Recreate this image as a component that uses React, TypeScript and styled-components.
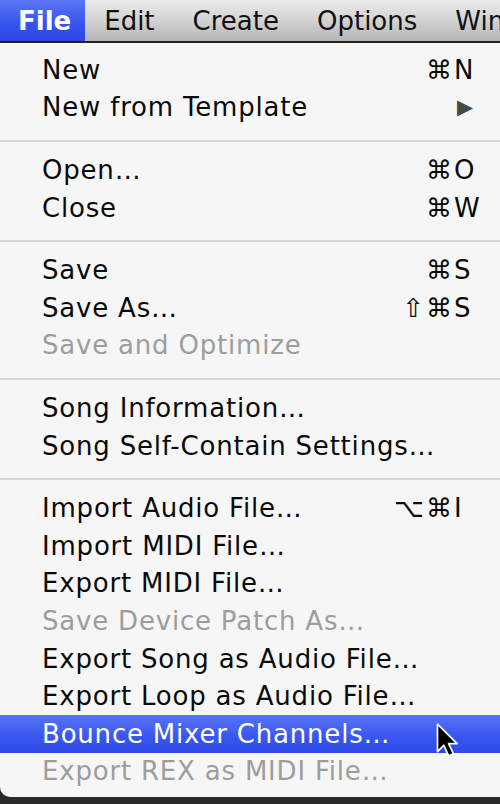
import styled, { createGlobalStyle } from "styled-components";

const GlobalStyle = createGlobalStyle`
   html, body {
      margin: 0;
      padding: 0;
      background: #2a2a2a;
   }
   body {
      font-family: "DejaVu Sans", "Liberation Sans", sans-serif;
      overflow: hidden;
   }
`;

type Entry =
   | { kind: "item"; label: string; mods?: string; keyChar?: string; submenu?: boolean; disabled?: boolean; active?: boolean }
   | { kind: "sep" };

const entries: Entry[] = [
   { kind: "item", label: "New", mods: "⌘", keyChar: "N" },
   { kind: "item", label: "New from Template", submenu: true },
   { kind: "sep" },
   { kind: "item", label: "Open...", mods: "⌘", keyChar: "O" },
   { kind: "item", label: "Close", mods: "⌘", keyChar: "W" },
   { kind: "sep" },
   { kind: "item", label: "Save", mods: "⌘", keyChar: "S" },
   { kind: "item", label: "Save As...", mods: "⇧⌘", keyChar: "S" },
   { kind: "item", label: "Save and Optimize", disabled: true },
   { kind: "sep" },
   { kind: "item", label: "Song Information..." },
   { kind: "item", label: "Song Self-Contain Settings..." },
   { kind: "sep" },
   { kind: "item", label: "Import Audio File...", mods: "⌥⌘", keyChar: "I" },
   { kind: "item", label: "Import MIDI File..." },
   { kind: "item", label: "Export MIDI File..." },
   { kind: "item", label: "Save Device Patch As...", disabled: true },
   { kind: "item", label: "Export Song as Audio File..." },
   { kind: "item", label: "Export Loop as Audio File..." },
   { kind: "item", label: "Bounce Mixer Channels...", active: true },
   { kind: "item", label: "Export REX as MIDI File...", disabled: true },
];

const titles = ["File", "Edit", "Create", "Options", "Windows"];

function App() {
   return (
      <>
         <GlobalStyle />
         <Screen>
            <MenuBar>
               {titles.map((t, i) => (
                  <MenuTitle key={t} open={i === 0}>
                     {t}
                  </MenuTitle>
               ))}
            </MenuBar>
            <Dropdown>
               {entries.map((e, i) =>
                  e.kind === "sep" ? (
                     <Separator key={i} />
                  ) : (
                     <Row key={i} disabled={e.disabled} active={e.active}>
                        <span>{e.label.replace(/\.\.\.$/, "…")}</span>
                        {e.submenu && <SubArrow>▶</SubArrow>}
                        {e.keyChar && (
                           <Shortcut>
                              <Mods>{e.mods}</Mods>
                              <KeyChar>{e.keyChar}</KeyChar>
                           </Shortcut>
                        )}
                        {e.active && (
                           <Cursor viewBox="0 0 22 34" width="24" height="36">
                              <path
                                 d="M2 1 L2 27 L8 21 L12.5 31 L17 29 L12.5 19.5 L20.5 19.5 Z"
                                 fill="#000"
                                 stroke="#fff"
                                 strokeWidth="1.6"
                                 strokeLinejoin="round"
                              />
                           </Cursor>
                        )}
                     </Row>
                  )
               )}
            </Dropdown>
         </Screen>
      </>
   );
}

export default App;

const Screen = styled.div`
   width: 500px;
   height: 804px;
   display: flex;
   flex-direction: column;
   overflow: hidden;
`;

const MenuBar = styled.div`
   height: 41px;
   flex-shrink: 0;
   display: flex;
   align-items: stretch;
   background: linear-gradient(#ebebeb, #d0d0d0 55%, #b4b4b4);
   border-bottom: 2px solid #222;
   white-space: nowrap;
`;

const MenuTitle = styled.div<{ open?: boolean }>`
   display: flex;
   align-items: center;
   padding: 0 19px;
   font-size: 26px;
   color: #111;
   ${({ open }) =>
      open &&
      `
      color: #fff;
      font-weight: 700;
      padding: 0 14px 0 18px;
      background: linear-gradient(#5b77f6, #3553ee 60%, #2b47e6);
   `}
`;

const Dropdown = styled.div`
   flex: 1;
   background: #f6f6f6;
   padding-top: 8px;
   border-bottom-left-radius: 10px;
   margin-bottom: 7px;
`;

const Row = styled.div<{ disabled?: boolean; active?: boolean }>`
   position: relative;
   height: 37.6px;
   display: flex;
   align-items: center;
   justify-content: space-between;
   padding: 0 20px 0 42px;
   font-size: 26px;
   letter-spacing: 0.8px;
   white-space: nowrap;
   color: ${({ disabled }) => (disabled ? "#9d9d9d" : "#0a0a0a")};
   ${({ active }) =>
      active &&
      `
      color: #fff;
      background: linear-gradient(#5674f6, #3a58ef 55%, #2d49e8);
   `}
`;

const Separator = styled.div`
   height: 25px;
   display: flex;
   flex-direction: column;
   padding-top: 14px;
   box-sizing: border-box;

   &::before {
      content: "";
      height: 2px;
      background: #d6d6d6;
   }
`;

const Shortcut = styled.span`
   display: flex;
   align-items: center;
   letter-spacing: 0;
`;

const Mods = styled.span`
   letter-spacing: 2px;
`;

const KeyChar = styled.span`
   width: 26px;
   text-align: left;
`;

const SubArrow = styled.span`
   color: #484848;
   font-size: 21px;
   margin-right: 6px;
`;

const Cursor = styled.svg`
   position: absolute;
   left: 435px;
   top: 8px;
`;
